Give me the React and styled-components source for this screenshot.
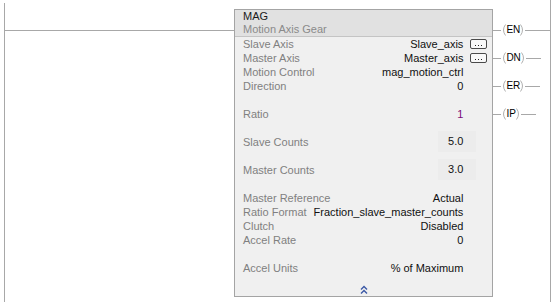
import React from "react";
import styled, { createGlobalStyle } from "styled-components";

const GlobalStyle = createGlobalStyle`
  html, body {
    margin: 0;
    padding: 0;
    background: #ffffff;
  }
  body {
    font-family: "Liberation Sans", Arial, sans-serif;
    font-size: 11px;
  }
`;

const WIRE = "#a8a8a8";

const rows = [
  { label: "Slave Axis", value: "Slave_axis", browse: true },
  { label: "Master Axis", value: "Master_axis", browse: true },
  { label: "Motion Control", value: "mag_motion_ctrl" },
  { label: "Direction", value: "0" },
  null,
  { label: "Ratio", value: "1", live: true },
  null,
  { label: "Slave Counts", value: "5.0", field: true },
  null,
  { label: "Master Counts", value: "3.0", field: true },
  null,
  { label: "Master Reference", value: "Actual" },
  { label: "Ratio Format", value: "Fraction_slave_master_counts" },
  { label: "Clutch", value: "Disabled" },
  { label: "Accel Rate", value: "0" },
  null,
  { label: "Accel Units", value: "% of Maximum" },
];

const coils = [
  { name: "EN", toRail: true },
  { name: "DN" },
  { name: "ER" },
  { name: "IP" },
];

export default function App() {
  return (
    <>
      <GlobalStyle />
      <Ladder>
        <Rail $top={3} $height={299} />
        <InputWire />
        <Block>
          <Header>
            <Title>MAG</Title>
            <Subtitle>Motion Axis Gear</Subtitle>
          </Header>
          <Body>
            {rows.map((row, i) =>
              row ? (
                <Row key={i}>
                  <Label>{row.label}</Label>
                  <Value $live={row.live}>
                    {row.field ? <Field>{row.value}</Field> : row.value}
                  </Value>
                  <Slot>
                    {row.browse && (
                      <Browse>
                        <Dot />
                        <Dot />
                        <Dot />
                      </Browse>
                    )}
                  </Slot>
                </Row>
              ) : (
                <Row key={i} />
              )
            )}
          </Body>
          <Footer>
            <svg width="8" height="9" viewBox="0 0 8 9">
              <path d="M1 4.5 L4 1.5 L7 4.5" fill="none" stroke="#3b58a6" strokeWidth="1.4" />
              <path d="M1 8.5 L4 5.5 L7 8.5" fill="none" stroke="#3b58a6" strokeWidth="1.4" />
            </svg>
          </Footer>
        </Block>
        <Outputs>
          {coils.map((c) => (
            <Coil key={c.name}>
              <Wire $width={8} />
              <svg width="5" height="12" viewBox="0 0 5 12">
                <path d="M4.5 0.5 Q0.5 6 4.5 11.5" fill="none" stroke="#b0b0b0" />
              </svg>
              <CoilName>{c.name}</CoilName>
              <svg width="5" height="12" viewBox="0 0 5 12">
                <path d="M0.5 0.5 Q4.5 6 0.5 11.5" fill="none" stroke="#b0b0b0" />
              </svg>
              <Wire $width={c.toRail ? undefined : 15} $grow={c.toRail} />
            </Coil>
          ))}
        </Outputs>
        <Rail $top={0} $height={302} />
      </Ladder>
    </>
  );
}

const Ladder = styled.div`
  display: flex;
  align-items: flex-start;
  width: 551px;
  height: 305px;
  padding-left: 4px;
  box-sizing: border-box;
  overflow: hidden;
`;

const Rail = styled.div`
  flex: 0 0 1px;
  margin-top: ${(p) => p.$top}px;
  height: ${(p) => p.$height}px;
  background: ${WIRE};
`;

const InputWire = styled.div`
  flex: 0 0 229px;
  margin-top: 30px;
  border-top: 1px solid ${WIRE};
`;

const Block = styled.div`
  flex: 0 0 255px;
  box-sizing: border-box;
  margin-top: 9px;
  border: 1px solid #a4a4a4;
  background: #f0f0f0;
`;

const Header = styled.div`
  background: #e1e1e1;
  padding: 0 8px;
  border-bottom: 1px solid #c4c4c4;
`;

const Title = styled.div`
  height: 13px;
  line-height: 13px;
  color: #1a1a1a;
`;

const Subtitle = styled.div`
  height: 13px;
  line-height: 13px;
  color: #8a8a8a;
`;

const Body = styled.div`
  display: flex;
  flex-direction: column;
`;

const Row = styled.div`
  display: grid;
  grid-template-columns: 1fr auto 17px;
  column-gap: 7px;
  align-items: center;
  height: 14px;
  line-height: 14px;
  padding: 0 5px 0 8px;
`;

const Label = styled.span`
  color: #808080;
  white-space: nowrap;
`;

const Value = styled.span`
  color: ${(p) => (p.$live ? "#7a0a7a" : "#111111")};
  text-align: right;
  white-space: nowrap;
`;

const Field = styled.span`
  display: block;
  height: 21px;
  line-height: 21px;
  margin: -4px -13px -3px 0;
  padding: 0 13px 0 10px;
  background: #ececec;
`;

const Slot = styled.span`
  display: flex;
  align-items: center;
  height: 14px;
`;

const Browse = styled.span`
  box-sizing: border-box;
  display: flex;
  justify-content: center;
  align-items: flex-end;
  gap: 2px;
  width: 17px;
  height: 10px;
  padding-bottom: 2px;
  border: 1px solid #4a4a4a;
  border-radius: 2px;
  background: #f8f8f8;
  margin-top: -1px;
`;

const Dot = styled.span`
  width: 1px;
  height: 1px;
  background: #222222;
`;

const Footer = styled.div`
  display: flex;
  justify-content: center;
  align-items: flex-end;
  height: 21px;
  box-sizing: border-box;
  padding-bottom: 2px;
`;

const Outputs = styled.div`
  flex: 0 0 57px;
  display: flex;
  flex-direction: column;
  gap: 14px;
  padding-top: 23px;
`;

const Coil = styled.div`
  display: flex;
  align-items: center;
  height: 14px;
`;

const Wire = styled.div`
  flex: ${(p) => (p.$grow ? "1 1 auto" : `0 0 ${p.$width}px`)};
  height: 1px;
  background: ${WIRE};
`;

const CoilName = styled.span`
  font-size: 10px;
  line-height: 14px;
  color: #000000;
`;
